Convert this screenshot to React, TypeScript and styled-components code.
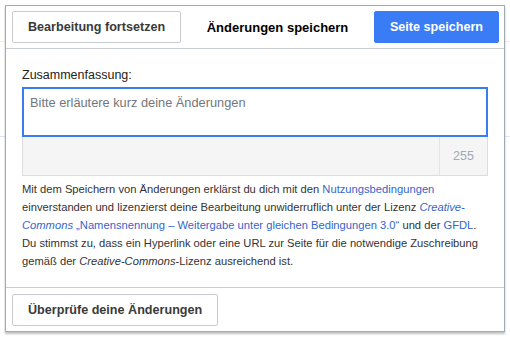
import React from "react";
import styled, { createGlobalStyle } from "styled-components";

const Global = createGlobalStyle`
  html, body { margin: 0; padding: 0; background: #fff; }
  body { font-family: "Liberation Sans", Arial, sans-serif; }
  * { box-sizing: border-box; }
`;

const Page = styled.div`
  position: relative;
  width: 510px;
  height: 337px;
  overflow: hidden;
  background: #fff;
`;

const Backdrop = styled.div`
  display: flex;
  flex-direction: column;
  height: 100%;
`;

const BackToolbar = styled.div`
  height: 42px;
  border-bottom: 1px solid #eaecf0;
`;

const BackContent = styled.div`
  margin-top: 94px;
  border-top: 1px solid #dbe6f7;
  flex: 1;
`;

const Dialog = styled.div`
  position: absolute;
  left: 5px;
  top: 5px;
  width: 500px;
  background: #fff;
  border: 1px solid #a2a9b1;
  box-shadow: 0 2px 2px rgba(0, 0, 0, 0.25);
  display: flex;
  flex-direction: column;
`;

const Header = styled.div`
  display: flex;
  align-items: center;
  height: 43px;
  padding: 0 5px 0 6px;
  border-bottom: 1px solid #c8ccd1;
`;

const Title = styled.div`
  flex: 1;
  text-align: center;
  font-weight: bold;
  font-size: 13px;
  color: #000;
`;

const Button = styled.button<{ $primary?: boolean }>`
  height: 32px;
  padding: 0 15px;
  border-radius: 2px;
  font-family: "Liberation Sans", Arial, sans-serif;
  font-weight: bold;
  font-size: 12.6px;
  cursor: pointer;
  border: 1px solid ${(p) => (p.$primary ? "#3a7cf5" : "#c8ccd1")};
  background: ${(p) => (p.$primary ? "#3a7cf5" : "#fff")};
  color: ${(p) => (p.$primary ? "#fff" : "#3a3a3a")};
`;

const Body = styled.div`
  padding: 18px 16px 17px 16px;
  display: flex;
  flex-direction: column;
`;

const Label = styled.label`
  font-size: 12.5px;
  color: #222;
  line-height: 16px;
  margin-bottom: 4px;
`;

const Field = styled.div`
  display: flex;
  flex-direction: column;
`;

const TextArea = styled.textarea`
  height: 50px;
  resize: none;
  border: 2px solid #3a7cf5;
  padding: 5px 6px;
  font-family: "Liberation Sans", Arial, sans-serif;
  font-size: 12.8px;
  line-height: 18px;
  color: #222;
  outline: none;
  &::placeholder { color: #72777d; opacity: 1; }
`;

const CounterBar = styled.div`
  display: flex;
  height: 39px;
  background: #f5f5f5;
  border: 1px solid #ddd;
  border-top: none;
`;

const Spacer = styled.div`
  flex: 1;
`;

const Counter = styled.div`
  width: 48px;
  border-left: 1px solid #e4e4e4;
  display: flex;
  align-items: center;
  justify-content: center;
  font-size: 12.5px;
  color: #a2a9b1;
`;

const Notice = styled.p`
  margin: 4px 0 0;
  font-size: 11.2px;
  line-height: 18px;
  color: #333;
`;

const Link = styled.a`
  color: #3366cc;
  text-decoration: none;
`;

const Footer = styled.div`
  display: flex;
  align-items: center;
  height: 44px;
  padding: 0 6px;
  border-top: 1px solid #c8ccd1;
`;

export default function App() {
  return (
    <>
      <Global />
      <Page>
        <Backdrop>
          <BackToolbar />
          <BackContent />
        </Backdrop>
        <Dialog>
          <Header>
            <Button>Bearbeitung fortsetzen</Button>
            <Title>Änderungen speichern</Title>
            <Button $primary>Seite speichern</Button>
          </Header>
          <Body>
            <Label>Zusammenfassung:</Label>
            <Field>
              <TextArea placeholder="Bitte erläutere kurz deine Änderungen" />
              <CounterBar>
                <Spacer />
                <Counter>255</Counter>
              </CounterBar>
            </Field>
            <Notice>
              Mit dem Speichern von Änderungen erklärst du dich mit den{" "}
              <Link href="#">Nutzungsbedingungen</Link> einverstanden und lizenzierst deine
              Bearbeitung unwiderruflich unter der Lizenz{" "}
              <Link href="#">
                <i>Creative-Commons</i> „Namensnennung – Weitergabe unter gleichen Bedingungen 3.0“
              </Link>{" "}
              und der <Link href="#">GFDL</Link>. Du stimmst zu, dass ein Hyperlink oder eine URL
              zur Seite für die notwendige Zuschreibung gemäß der <i>Creative-Commons</i>-Lizenz
              ausreichend ist.
            </Notice>
          </Body>
          <Footer>
            <Button>Überprüfe deine Änderungen</Button>
          </Footer>
        </Dialog>
      </Page>
    </>
  );
}
